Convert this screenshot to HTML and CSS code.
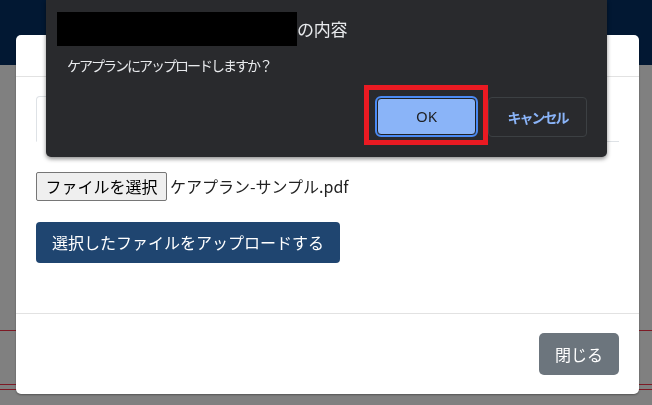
FILE: index.html
```html
<!DOCTYPE html>
<html lang="ja">
<head>
<meta charset="utf-8">
<title>ケアプラン アップロード</title>
<link rel="stylesheet" href="styles.css">
</head>
<body>
<div class="page">
  <div class="topbar"></div>
  <div class="page-main">
    <div class="rule"></div>
    <div class="rule rule-2"></div>
    <div class="rule rule-3"></div>
  </div>
</div>

<div class="modal">
  <div class="modal-header"></div>
  <div class="modal-body">
    <div class="nav-tabs">
      <div class="nav-tab"></div>
    </div>
    <div class="file-row">
      <span class="file-btn">ファイルを選択</span>
      <span class="file-name">ケアプラン-サンプル.pdf</span>
    </div>
    <div class="upload-row">
      <button class="btn-primary">選択したファイルをアップロードする</button>
    </div>
  </div>
  <div class="modal-footer">
    <button class="btn-secondary">閉じる</button>
  </div>
</div>

<div class="js-dialog">
  <div class="dlg-title"><span class="redact"></span><span class="dlg-title-text">の内容</span></div>
  <div class="dlg-msg">ケアプランにアップロードしますか？</div>
  <div class="dlg-buttons">
    <span class="highlight"><button class="dlg-ok">OK</button></span>
    <button class="dlg-cancel">キャンセル</button>
  </div>
</div>
</body>
</html>
```
FILE: styles.css
```css
* { box-sizing: border-box; }
html, body {
  margin: 0;
  padding: 0;
  width: 652px;
  height: 405px;
  overflow: hidden;
  font-family: "Noto Sans CJK JP", "Noto Sans", sans-serif;
}
.page {
  background: #808080;
  height: 405px;
}
.topbar {
  height: 65px;
  background: #021833;
}
.page-main {
  padding-top: 265px;
}
.rule {
  height: 1px;
  background: #7d1a25;
}
.rule-2 { margin-top: 53px; }
.rule-3 { margin-top: 4px; }

.modal {
  position: fixed;
  left: 16px;
  top: 35px;
  width: 623px;
  height: 359px;
  background: #fff;
  border-radius: 5px;
  box-shadow: 0 1px 2px rgba(0,0,0,.35);
  display: flex;
  flex-direction: column;
}
.modal-header {
  height: 42px;
  border-bottom: 1px solid #e2e2e2;
}
.modal-body {
  padding: 19px 20px 0;
  height: 236px;
}
.nav-tabs {
  height: 46px;
  border-bottom: 1px solid #dee2e6;
  display: flex;
}
.nav-tab {
  width: 150px;
  height: 46px;
  border: 1px solid #dee2e6;
  border-bottom-color: #fff;
  border-radius: 4px 4px 0 0;
  background: #fff;
}
.file-row {
  margin-top: 30px;
  height: 29px;
  display: flex;
  align-items: center;
  gap: 3px;
}
.file-btn {
  width: 131px;
  height: 29px;
  border: 1px solid #767676;
  border-radius: 2px;
  background: #efefef;
  color: #000;
  font-size: 16px;
  line-height: 27px;
  text-align: center;
}
.file-name {
  font-size: 16px;
  line-height: 27px;
  color: #222;
}
.upload-row {
  margin-top: 21px;
}
.btn-primary {
  width: 304px;
  height: 41px;
  padding: 0;
  border: 0;
  border-radius: 4px;
  background: #1f4570;
  color: #fff;
  font-family: inherit;
  font-size: 16px;
  line-height: 41px;
}
.modal-footer {
  border-top: 1px solid #e2e2e2;
  padding: 19px 20px;
  display: flex;
  justify-content: flex-end;
}
.btn-secondary {
  width: 80px;
  height: 42px;
  padding: 0;
  border: 0;
  border-radius: 5px;
  background: #6c757d;
  color: #fff;
  font-family: inherit;
  font-size: 16px;
  line-height: 42px;
}

.js-dialog {
  position: fixed;
  top: 0;
  left: 46px;
  width: 561px;
  height: 157px;
  background: #292a2d;
  border-radius: 0 0 5px 5px;
  box-shadow: 0 2px 4px rgba(0,0,0,.45);
  padding-top: 12px;
  display: flex;
  flex-direction: column;
}
.dlg-title {
  display: flex;
  align-items: center;
  height: 34px;
  padding-left: 11px;
}
.redact {
  width: 240px;
  height: 34px;
  background: #000;
}
.dlg-title-text {
  color: #e8eaed;
  font-size: 17px;
  line-height: 34px;
  letter-spacing: -0.3px;
}
.dlg-msg {
  margin-top: 11px;
  padding-left: 21px;
  color: #e8eaed;
  font-size: 14px;
  line-height: 17px;
  letter-spacing: -2px;
}
.dlg-buttons {
  margin-top: 11px;
  display: flex;
  justify-content: flex-end;
  align-items: flex-start;
  padding-right: 20px;
}
.highlight {
  display: block;
  border: 5px solid #ea1a22;
  padding: 8px 7px 5px 8px;
}
.dlg-ok {
  display: block;
  width: 99px;
  height: 37px;
  padding: 0;
  border: 1px solid #1f2023;
  border-radius: 4px;
  outline: 2px solid #4a8af4;
  outline-offset: 0;
  background: #8ab4f8;
  color: #202124;
  font-family: "Noto Sans", sans-serif;
  font-size: 15px;
  line-height: 35px;
}
.dlg-cancel {
  margin-top: 12px;
  width: 99px;
  height: 40px;
  padding: 0;
  border: 1px solid #3c4043;
  border-radius: 4px;
  background: transparent;
  color: #8ab4f8;
  font-family: inherit;
  font-size: 14px;
  font-weight: 700;
  letter-spacing: -2px;
  line-height: 38px;
}
```
